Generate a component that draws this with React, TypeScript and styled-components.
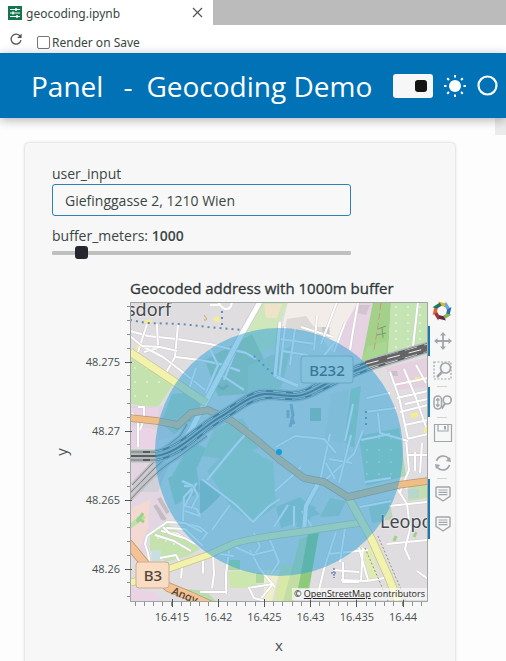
import React, { useState } from 'react';
import styled, { createGlobalStyle } from 'styled-components';

const GlobalStyle = createGlobalStyle`
  *, *::before, *::after { box-sizing: border-box; }
  body { margin: 0; background: #fdfdfd; font-family: "Open Sans", "Noto Sans", sans-serif; }
  button { font: inherit; }
`;

const Page = styled.div`
  display: flex;
  flex-direction: column;
  height: 100vh;
  overflow: hidden;
  color: #3a4644;
  font-size: 14px;
`;

const TabBar = styled.div`
  display: flex;
  flex: none;
  height: 25px;
  background: #bbbbbb;
`;

const Tab = styled.div`
  display: flex;
  align-items: center;
  width: 213px;
  gap: 4px;
  padding: 0 10px 0 8px;
  background: #ffffff;
  font: 12px/25px "Noto Sans", sans-serif;
`;

const TabName = styled.span`
  flex: 1;
  padding-top: 2px;
`;

const IconButton = styled.button`
  display: grid;
  place-items: center;
  padding: 0;
  border: 0;
  background: none;
  color: inherit;
  cursor: pointer;
`;

const PreviewBar = styled.div`
  display: flex;
  flex: none;
  align-items: center;
  gap: 14px;
  height: 28px;
  padding: 0 9px;
  background: #ffffff;
`;

const CheckLabel = styled.label`
  display: flex;
  align-items: center;
  gap: 2px;
  padding-top: 7px;
  font: 12px/20px "Noto Sans", sans-serif;
`;

const Check = styled.input`
  appearance: none;
  width: 13px;
  height: 13px;
  margin: 0;
  border: 1px solid #767676;
  border-radius: 2px;
  background: #ffffff;
  &:checked { background: #0072b5; }
`;

const Header = styled.header`
  display: flex;
  flex: none;
  align-items: center;
  height: 65px;
  padding: 0 8px 0 31px;
  background: #0072b5;
  box-shadow: 0 2px 10px rgba(0, 0, 0, 0.3);
  color: #ffffff;
  z-index: 1;
`;

const Heading = styled.h1`
  display: flex;
  flex: 1;
  margin: 0;
  font-size: 28px;
  font-weight: 400;
  line-height: 40px;
  white-space: nowrap;
`;

const Brand = styled.span`
  margin-right: 20px;
`;

const Dash = styled.span`
  margin-right: 14px;
`;

const HeaderTools = styled.div`
  display: flex;
  align-items: center;
  gap: 10px;
`;

const Switch = styled.input`
  appearance: none;
  display: flex;
  align-items: center;
  width: 40px;
  height: 24px;
  margin: 0;
  padding: 0 6px;
  border-radius: 3px;
  background: #f7f7f7;
  cursor: pointer;
  &::before {
    content: "";
    width: 12px;
    height: 12px;
    border-radius: 3px;
    background: #151515;
  }
  &:checked { justify-content: flex-end; }
`;

const Main = styled.main`
  display: flex;
  flex: 1;
  min-height: 0;
  overflow: hidden;
`;

const Content = styled.div`
  flex: 1;
  padding: 25px 40px 0 25px;
`;

const Card = styled.section`
  min-height: 600px;
  padding: 20px 0 20px 27px;
  border-radius: 4px;
  background: #f7f7f7;
  box-shadow: 0 0 3px rgba(0, 0, 0, 0.24);
`;

const ScrollColumn = styled.div`
  width: 11px;
  &::before {
    content: "";
    display: block;
    height: 17px;
    background: #ebebeb;
  }
`;

const Field = styled.div`
  display: flex;
  flex-direction: column;
  margin-right: 104px;
`;

const FieldLabel = styled.label`
  line-height: 21px;
  b { font-weight: 600; }
`;

const TextBox = styled.input`
  height: 32px;
  margin-bottom: 9px;
  padding: 0 12px;
  border: 1px solid #2c82b4;
  border-radius: 3px;
  outline: none;
  background: #f8f8f8;
  color: inherit;
  font: 14px "Open Sans", sans-serif;
`;

const Range = styled.input`
  appearance: none;
  width: 100%;
  height: 14px;
  margin: 0;
  background: none;
  &::-webkit-slider-runnable-track {
    height: 4px;
    border-radius: 1px;
    background: #bfbfbf;
  }
  &::-webkit-slider-thumb {
    appearance: none;
    width: 13px;
    height: 13px;
    margin-top: -5px;
    border-radius: 3px;
    background: #26262e;
  }
`;

const Figure = styled.div`
  display: flex;
  margin-top: 17px;
`;

const PlotArea = styled.div`
  position: relative;
  flex: 1;
`;

const Chart = styled.svg`
  display: block;
  width: 100%;
  height: auto;
`;

const Attribution = styled.div`
  position: absolute;
  right: 1px;
  bottom: 61px;
  padding: 0 2px;
  background: rgba(255, 255, 255, 0.6);
  color: #222222;
  font-size: 9px;
  line-height: 12px;
  a { color: inherit; }
`;

const ToolBar = styled.div`
  display: flex;
  flex: none;
  flex-direction: column;
  align-items: center;
  width: 27px;
  padding-top: 24px;
`;

const LogoLink = styled.a`
  display: grid;
  place-items: center;
  height: 20px;
  margin-bottom: 5px;
`;

const Tool = styled(IconButton)<{ $active?: boolean }>`
  width: 100%;
  height: 30px;
  border-left: 2px solid ${p => (p.$active ? '#1b79b0' : 'transparent')};
  color: #a1a6a9;
`;

const Divider = styled.hr`
  width: 10px;
  height: 1px;
  margin: 0;
  border: 0;
  background: #d3d3d3;
`;

const range = (n: number) => Array.from({ length: n }, (_, i) => i);

const Y_LABELS = ['48.275', '48.27', '48.265', '48.26'];
const X_LABELS = ['16.415', '16.42', '16.425', '16.43', '16.435', '16.44'];

const PATCHES: [string, string][] = [
  ['#c3e2ae', 'M0 56L45 80L28 105L0 102Z'],
  ['#ded5dc', 'M0 104L30 104L50 112L48 134L0 146Z'],
  ['#ead3e4', 'M0 106H28V114L0 112ZM0 124L26 127L30 146H0Z'],
  ['#e3d6e2', 'M0 158H26L30 186L40 214L16 232L14 258L0 244Z'],
  ['#f3d9d2', 'M0 207L20 198L18 225L8 250L0 244Z'],
  ['#bde0a8', 'M0 222L12 211L16 216L0 227Z'],
  ['#d0d0d8', 'M6 190L24 160L40 160L28 190Z'],
  ['#c3e2ae', 'M20 230L38 222L70 247L58 254L36 260L20 248Z'],
  ['#c8dfe0', 'M22 248H31V259H22Z'],
  ['#ead3e4', 'M0 285L26 291L32 299H0Z'],
  ['#b5deac', 'M46 286L76 289L86 299H62Z'],
  ['#cbe7ae', 'M98 270L124 268L128 286L100 286Z'],
  ['#add9a0', 'M98 258H110V268H98ZM126 271H144V281H126Z'],
  ['#d7e8a8', 'M152 262L164 264L154 299H144Z'],
  ['#eeeec8', 'M134 268L150 268L142 299H134Z'],
  ['#c2dea5', 'M170 237L190 230L164 299H153Z'],
  ['#8fc97c', 'M178 232L189 230L179 287H168Z'],
  ['#cfe8bb', 'M132 0H158L150 20L145 45L108 60L113 34Z'],
  ['#efe3c7', 'M134 2H152L147 16H136Z'],
  ['#f2ede8', 'M158 0H228L217 22L202 50L190 34L152 24Z'],
  ['#dcd9d7', 'M157 17L176 14L184 25H200V37L178 32L155 27Z'],
  ['#c9c8c8', 'M192 25H199V33H192Z'],
  ['#e5d2e2', 'M228 0H243L232 60L203 48L216 21Z'],
  ['#d1c4cf', 'M229 3H240L236 13L228 11Z'],
  ['#a3d18a', 'M243 0H261L258 54L231 62Z'],
  ['#c5e4b4', 'M261 0H298V43L258 54Z'],
  ['#a8d794', 'M237 45L256 39V54L231 61Z'],
  ['#e4d0df', 'M256 66L297 56V85L266 88Z'],
  ['#c6c2c5', 'M261 69H267L268 74H262Z'],
  ['#c4dfaf', 'M279 183H297V196L278 199Z'],
  ['#b7d6cd', 'M278 187H289V196H278Z'],
  ['#bad6cd', 'M237 258H244V275H237Z'],
  ['#dfeab6', 'M229 244L242 247L249 279L236 280Z'],
];

const PARKS: [string, string][] = [
  ['#9bc790', 'M75 58L122 32L140 70L116 92L88 94Z'],
  ['#a6d5a6', 'M118 64L162 44L151 86L118 94Z'],
  ['#9ccfa2', 'M42 92L65 90L78 108L44 132L31 121Z'],
  ['#aad5a5', 'M84 127L112 116L132 144L102 158L72 154Z'],
  ['#a9dcb0', 'M77 169L106 140L143 160L146 204L124 220L102 206Z'],
  ['#7fb5a5', 'M70 178L92 192L80 204L72 211L70 211Z'],
  ['#92c9a3', 'M38 176L66 161L70 190L45 203ZM61 140L76 146L67 166L42 174Z'],
  ['#90d09c', 'M229 134L269 126L276 174L236 184ZM221 87L231 84L224 146L214 139Z'],
  ['#9bcbb0', 'M146 205L170 195L190 212L151 226ZM173 201L186 205L176 226L166 225Z'],
  ['#a4cfaa', 'M200 196L216 199L209 214L190 215ZM238 202L259 197L263 217L242 221Z'],
  ['#78ae86', 'M180 106H191V119H180Z'],
  ['#ccd9d0', 'M201 92L219 87L213 142L195 136Z'],
];

const WHITE_ROADS = [
  'M0 29L18 34L47 37L80 42L116 51L126 57', 'M17 22L8 50', 'M48 23L45 55L36 71',
  'M27 22L28 46L14 50', 'M12 44L33 55L50 68L75 88', 'M46 55L70 58L90 62L110 69',
  'M80 47L88 63L76 91', 'M105 50L94 78M90 72L108 84L114 88M66 66L58 90',
  'M0 34L12 44L30 45L47 49', 'M8 145L8 118L2 111M8 105H14V117L10 128',
  'M155 25L149 78M165 27L160 63M150 37L185 42M152 49L178 53M171 25L203 35',
  'M187 14L184 48M228 0L223 29L220 48M288 0L283 45M215 21L204 50',
  'M77 178L105 144L120 127M72 177L106 203L123 220L139 204L150 197M100 203L82 228',
  'M67 181L54 195L53 220M54 184H65L55 204L67 207L70 214L55 209',
  'M52 179L63 184L68 194L61 207M46 219L70 225L77 231L72 238',
  'M21 269L18 251L15 242L17 234L37 220L55 221L72 230',
  'M25 233L44 239L61 249M31 229L48 232L65 242M36 226L55 227L73 244',
  'M33 225L39 231L54 236M73 253V271M83 251L84 272L82 286M99 249L96 272L96 292',
  'M30 256L46 253L52 265L51 276M70 290L96 290M120 248L130 267L145 285M118 286L143 282L129 299',
  'M119 286L124 296L135 299M124 231L130 244L123 255M138 233L149 260L141 272M104 254L90 252',
  'M105 245L123 253L143 248M205 40L192 56L188 68M200 132L189 184L175 208L173 228',
  'M145 189L163 173L171 165M207 0L191 42M199 157L222 161M193 180L224 152L233 128',
  'M196 161L205 177M221 133L209 181M206 230L194 267L188 292M198 252L238 248M213 260V280H229M229 246L238 278M233 246L231 279M203 268L229 270M211 278L237 279L254 276',
  'M260 70L269 95L278 137M274 67L286 96L296 125M286 63L296 81M264 83L298 76M267 96L298 89M270 110L298 103M275 123L298 118M277 137L298 132M298 97L275 102',
  'M276 137L279 168L270 190M277 153H298M281 178L276 187M285 150V169M292 141L290 171M268 188L277 202L280 227L275 247L280 258M259 204L297 200M257 242L297 238M287 269L298 277',
  'M206 151L194 137L165 134L146 145M223 102L215 139M237 96L260 91M235 110L266 106M248 111L250 131L278 139M231 138L260 132',
  'M172 209L183 227M144 225L158 203M164 224V204M215 226L210 260M230 205L261 199M235 180L261 176',
];

const RAILS = [
  'M0 150H24C48 146 63 128 85 114C104 104 117 91 132 89C151 88 166 96 183 84L204 73L243 58L298 42',
  'M0 154H26C50 150 65 131 87 117C105 107 116 95 134 92C152 91 165 100 186 87L207 76L244 61L298 45',
  'M0 158H26C52 154 67 134 89 120C107 110 118 98 136 96C151 94 165 103 188 90L210 79L245 65L298 49',
];

const YARD = [
  'M0 191C15 177 27 161 44 151L73 131L94 119', 'M0 198C16 181 30 166 47 156L77 134',
  'M25 153L50 134L57 122M27 158L52 143L67 130', 'M2 183L19 165L28 156',
];

const Road = ({ d, casing, color, width }: { d: string; casing: string; color: string; width: number }) => (
  <g fill="none" strokeLinejoin="round">
    <path d={d} stroke={casing} strokeWidth={width + 1.5} />
    <path d={d} stroke={color} strokeWidth={width} />
  </g>
);

const StreetMap = () => (
  <svg x="78" y="25" width="298" height="299" viewBox="0 0 298 299">
    <rect width="298" height="299" fill="#dfdddf" />
    {PATCHES.map(([fill, d]) => <path key={d} d={d} fill={fill} />)}
    <g opacity=".6">
      {PARKS.map(([fill, d]) => <path key={d} d={d} fill={fill} />)}
    </g>
    <g fill="#e6f2db">
      {range(18).map(i => <circle key={i} cx={266 + (i % 3) * 12} cy={5 + Math.floor(i / 3) * 8} r="1" />)}
      {range(8).map(i => <circle key={i} cx={5 + (i % 3) * 12} cy={66 + Math.floor(i / 3) * 14} r="1" />)}
      {range(12).map(i => <circle key={i} cx={237 + (i % 3) * 12} cy={136 + Math.floor(i / 3) * 12} r="1" />)}
      {range(5).map(i => <circle key={i} cx={28 + i * 8} cy={236 + i * 3} r="1" />)}
    </g>
    <g fill="#f6ee8e">
      <path d="M83 16L89 14L90 20L84 19ZM9 40L14 42L9 49L5 46ZM285 75H290V80H285ZM280 112L288 110V115L281 116ZM294 125H298V131H294ZM14 19L21 17L22 21H15Z" />
    </g>
    <path d="M25 203L35 218M29 196L38 211M28 207L33 217" stroke="#c4bcc3" strokeWidth="4" fill="none" />
    <path d="M161 102L163 113L160 125M158 108V116M162 116L164 122" stroke="#98a9b4" strokeWidth="3" fill="none" />
    <path d="M86 83L93 87L98 83M46 128L57 116L60 119" stroke="#a2b5a0" strokeWidth="3" fill="none" />
    {WHITE_ROADS.map(d => (
      <g key={d} fill="none" strokeLinejoin="round">
        <path d={d} stroke="#cfcccf" strokeWidth="3" />
        <path d={d} stroke="#ffffff" strokeWidth="2" />
      </g>
    ))}
    <path d="M88 0L91 4C94 8 99 8 101 4L102 0M90 3L80 3" fill="none" stroke="#fff" strokeWidth="2" />
    <Road d="M131 -2L113 30L75 101L61 128L50 145" casing="#cac7c9" color="#ffffff" width={5} />
    <Road d="M150 20L145 74L168 84" casing="#cac7c9" color="#ffffff" width={3} />
    <Road d="M190 178L176 204L174 230" casing="#cac7c9" color="#ffffff" width={4} />
    <Road d="M0 50L45 80L76 101" casing="#c6c58b" color="#f2f2ad" width={7} />
    <Road d="M-2 281L12 278L38 267L78 253L105 241C130 234 162 232 195 226L235 220" casing="#c6c58b" color="#f2f2ad" width={6} />
    <Road d="M218 195L242 238L259 276L268 299" casing="#c6c58b" color="#f2f2ad" width={7} />
    <path d="M248 234L276 299M235 246L258 299" fill="none" stroke="#94967c" strokeWidth="1" strokeDasharray="2 2" />
    <Road d="M0 116L27 119L48 123L61 111L78 108L102 119L128 139L150 158L174 176L194 180L218 195L268 183L298 179" casing="#bd9471" color="#efbd86" width={6} />
    <Road d="M-2 241L16 263L38 285L60 294L80 303" casing="#bd9471" color="#f3c396" width={8} />

    {YARD.map(d => (
      <g key={d} fill="none">
        <path d={d} stroke="#b2b6b8" strokeWidth="4" opacity=".6" />
        <path d={d} stroke="#777d80" strokeWidth="1" />
      </g>
    ))}
    {RAILS.map(d => <path key={d} d={d} fill="none" stroke="#b4babb" strokeWidth="5" />)}
    {RAILS.map((d, i) => (
      <g key={d} fill="none">
        <path d={d} stroke="#565c5f" strokeWidth="2" />
        {i !== 1 && <path d={d} stroke="#cfd1d1" strokeWidth="1" strokeDasharray="13 7" />}
      </g>
    ))}
    <path d="M236 62L298 46" stroke="#646464" strokeWidth="6" />
    <path d="M236 62L298 46" stroke="#f0f0f0" strokeWidth="1" strokeDasharray="13 9" />
    <g fill="none" stroke="#638cae" strokeWidth="2" strokeDasharray="2 4">
      <path d="M0 18L17 21L52 22L78 25L113 28" />
      <path d="M92 9V27M124 54L146 75M236 109V127" />
    </g>
    <path d="M251 1L248 24L244 48" stroke="#d0967b" strokeDasharray="7 3" fill="none" />
    <path d="M248 27L256 24M247 33L256 31M252 25L253 36" stroke="#799c70" fill="none" />
    <path d="M74 18Q79 19 74 13" stroke="#caa850" fill="none" />
    <path d="M201 271H207M204 266V276" stroke="#8f9bc5" strokeWidth="2" strokeDasharray="2 1" />
    <path d="M7 220L13 211M14 220L7 216M264 239L266 234M284 235L286 230" stroke="#9ed08e" strokeWidth="3" />

    <rect x="171" y="54" width="52" height="27" rx="3" fill="#dfe4df" stroke="#a9ada9" />
    <g fontFamily="Noto Sans, sans-serif" fill="#46484d">
      <text x="197" y="74" fontSize="15" fontWeight="500" textAnchor="middle">B232</text>
      <g fontSize="18" stroke="#f2f2f2" strokeWidth="2" strokeOpacity=".65" paintOrder="stroke">
        <text x="-3" y="14">sdorf</text>
        <text x="250" y="226">Leopo</text>
      </g>
      <text fontSize="11" fontWeight="500" transform="translate(41 292) rotate(22)" fill="#52402f">Angy</text>
    </g>
    <rect x="6" y="260" width="33" height="26" rx="3" fill="#f8dcc4" stroke="#cfac91" />
    <text x="23" y="279" fontFamily="Noto Sans, sans-serif" fontSize="15" fontWeight="500" textAnchor="middle" fill="#51443b">B3</text>
    <circle cx="149" cy="150" r="124" fill="#30a2da" fillOpacity=".52" />
    <circle cx="149" cy="150" r="3" fill="#169bdd" />
  </svg>
);

const GeoPlot = () => (
  <Chart viewBox="0 0 376 384" role="img" aria-label="Geocoded address with 1000m buffer">
    <text x="78" y="17" fontSize="15" fill="#30383a" stroke="#30383a" strokeWidth=".3">Geocoded address with 1000m buffer</text>
    <StreetMap />
    <rect x="78.5" y="25.5" width="297" height="299" fill="none" stroke="#a0a5a5" />
    <g stroke="#8b8f90" shapeRendering="crispEdges">
      {range(22).map(i => <path key={i} d={`M${75} ${29.8 + i * 13.8}H78`} />)}
      {range(32).map(i => <path key={i} d={`M${83 + i * 9.24} 325V329`} />)}
    </g>
    <g stroke="#515657" shapeRendering="crispEdges">
      {Y_LABELS.map((label, i) => <path key={label} d={`M73 ${85 + i * 69}H80`} />)}
      {X_LABELS.map((label, i) => <path key={label} d={`M${120 + i * 46.2} 322V330`} />)}
    </g>
    <g fontSize="11" fill="#484f50">
      {Y_LABELS.map((label, i) => <text key={label} x="68" y={89 + i * 69} textAnchor="end">{label}</text>)}
      {X_LABELS.map((label, i) => <text key={label} x={120 + i * 46.2} y="344" textAnchor="middle">{label}</text>)}
    </g>
    <g fontSize="15" fill="#4b5253" textAnchor="middle">
      <text transform="translate(15 175) rotate(-90)">y</text>
      <text x="227" y="374">x</text>
    </g>
  </Chart>
);

const NotebookIcon = () => (
  <svg width="14" height="14" viewBox="0 0 14 14">
    <rect width="14" height="14" fill="#15734e" />
    <path d="M2 3.5H12M2 7H12M2 10.5H12" stroke="#fff" />
    <path d="M8 2V5M5 5.5V8.5M9 9V12" stroke="#fff" strokeWidth="1.5" />
  </svg>
);

const CloseIcon = () => (
  <svg width="11" height="11" viewBox="0 0 11 11"><path d="M1 1L10 10M10 1L1 10" stroke="#555" strokeWidth="1.2" /></svg>
);

const ReloadIcon = () => (
  <svg width="14" height="14" viewBox="0 0 14 14">
    <path d="M11.2 4.2A5 5 0 1 0 12 8.2" fill="none" stroke="#555" strokeWidth="1.3" />
    <path d="M12.6 1.5V6H8.1Z" fill="#555" />
  </svg>
);

const SunIcon = () => (
  <svg width="24" height="24" viewBox="0 0 24 24">
    <circle cx="12" cy="12" r="6" fill="#fff" />
    {range(8).map(i => <path key={i} d="M12 1V3.5" stroke="#fff" strokeWidth="2" transform={`rotate(${i * 45} 12 12)`} />)}
  </svg>
);

const RingIcon = () => (
  <svg width="21" height="21" viewBox="0 0 21 21"><circle cx="10.5" cy="10.5" r="9" fill="none" stroke="#fff" strokeWidth="2.2" /></svg>
);

const LOGO_COLORS = ['#e0b43b', '#6ba9d6', '#2771a6', '#87b54b', '#6a2649', '#9b3636', '#d8673c', '#227661'];

const BokehLogo = () => (
  <svg width="20" height="20" viewBox="0 0 20 20">
    {LOGO_COLORS.map((color, i) => (
      <path key={color} d="M6 .6L14.5 2.5L13.5 6L8.5 4.8Z" fill={color} transform={`rotate(${i * 45} 10 10)`} />
    ))}
  </svg>
);

const ToolIcon = ({ children }: { children: React.ReactNode }) => (
  <svg width="20" height="20" viewBox="0 0 20 20" fill="none" stroke="currentColor" strokeWidth="1.2">{children}</svg>
);

const PanIcon = () => (
  <ToolIcon>
    <path d="M10 3V17M3 10H17" strokeWidth="1.8" />
    <path d="M10 1L13 4.5H7ZM10 19L13 15.5H7ZM1 10L4.5 7V13ZM19 10L15.5 7V13Z" fill="currentColor" stroke="none" />
  </ToolIcon>
);

const BoxZoomIcon = () => (
  <ToolIcon>
    <rect x="1" y="1" width="17" height="17" strokeDasharray="2 1.5" />
    <circle cx="12.5" cy="7" r="5" fill="#f7f7f7" strokeWidth="1.7" />
    <path d="M9 11L4 16" strokeWidth="2.5" />
  </ToolIcon>
);

const WheelZoomIcon = () => (
  <ToolIcon>
    <rect x="1" y="4" width="7.5" height="13" rx="3.7" strokeWidth="1.5" />
    <path d="M4.8 7V14M3 8.5L4.8 6.5L6.5 8.5M3 12.5L4.8 14.5L6.5 12.5" />
    <circle cx="14.2" cy="8" r="4" strokeWidth="1.7" />
    <path d="M12 11.5L8.8 16.5" strokeWidth="2.2" />
  </ToolIcon>
);

const SaveIcon = () => (
  <ToolIcon>
    <path d="M1.5 1.5H18.5V18.5H1.5ZM5 1.5V8H15V1.5" />
    <path d="M12 3V6.5" strokeWidth="2" />
  </ToolIcon>
);

const ResetIcon = () => (
  <ToolIcon>
    <path d="M3.5 8A7 7 0 0 1 15.6 5.6M16.5 12A7 7 0 0 1 4.4 14.4" strokeWidth="1.7" />
    <path d="M18 9L12.8 8L17 4ZM2 11L7.2 12L3 16Z" fill="currentColor" stroke="none" />
  </ToolIcon>
);

const HoverIcon = () => (
  <ToolIcon>
    <path d="M4 3H16Q17 3 17 4V12Q17 13 16 13L10 17L4 13Q3 13 3 12V4Q3 3 4 3Z" strokeWidth="1.4" />
    <path d="M5.5 6H14.5M5.5 8.3H14.5M5.5 10.6H14.5" />
  </ToolIcon>
);

export default function App() {
  const [address, setAddress] = useState('Giefinggasse 2, 1210 Wien');
  const [meters, setMeters] = useState(1000);

  return (
    <Page>
      <GlobalStyle />
      <TabBar>
        <Tab>
          <NotebookIcon />
          <TabName>geocoding.ipynb</TabName>
          <IconButton aria-label="Close tab"><CloseIcon /></IconButton>
        </Tab>
      </TabBar>
      <PreviewBar>
        <IconButton aria-label="Reload"><ReloadIcon /></IconButton>
        <CheckLabel><Check type="checkbox" />Render on Save</CheckLabel>
      </PreviewBar>
      <Header>
        <Heading><Brand>Panel</Brand><Dash>-</Dash><span>Geocoding Demo</span></Heading>
        <HeaderTools>
          <Switch type="checkbox" role="switch" aria-label="Toggle theme" defaultChecked />
          <SunIcon />
          <RingIcon />
        </HeaderTools>
      </Header>
      <Main>
        <Content>
          <Card>
            <Field>
              <FieldLabel htmlFor="address">user_input</FieldLabel>
              <TextBox id="address" value={address} onChange={e => setAddress(e.target.value)} />
              <FieldLabel htmlFor="buffer">buffer_meters: <b>{meters}</b></FieldLabel>
              <Range id="buffer" type="range" min={200} max={10000} step={100} value={meters}
                onChange={e => setMeters(Number(e.target.value))} />
            </Field>
            <Figure>
              <PlotArea>
                <GeoPlot />
                <Attribution>© <a href="https://www.openstreetmap.org/copyright">OpenStreetMap</a> contributors</Attribution>
              </PlotArea>
              <ToolBar role="toolbar" aria-label="Plot tools">
                <LogoLink href="https://bokeh.org/" aria-label="Bokeh"><BokehLogo /></LogoLink>
                <Tool $active aria-label="Pan"><PanIcon /></Tool>
                <Tool aria-label="Box zoom"><BoxZoomIcon /></Tool>
                <Divider />
                <Tool $active aria-label="Wheel zoom"><WheelZoomIcon /></Tool>
                <Divider />
                <Tool aria-label="Save"><SaveIcon /></Tool>
                <Tool aria-label="Reset"><ResetIcon /></Tool>
                <Divider />
                <Tool $active aria-label="Hover points"><HoverIcon /></Tool>
                <Tool $active aria-label="Hover polygons"><HoverIcon /></Tool>
              </ToolBar>
            </Figure>
          </Card>
        </Content>
        <ScrollColumn />
      </Main>
    </Page>
  );
}
